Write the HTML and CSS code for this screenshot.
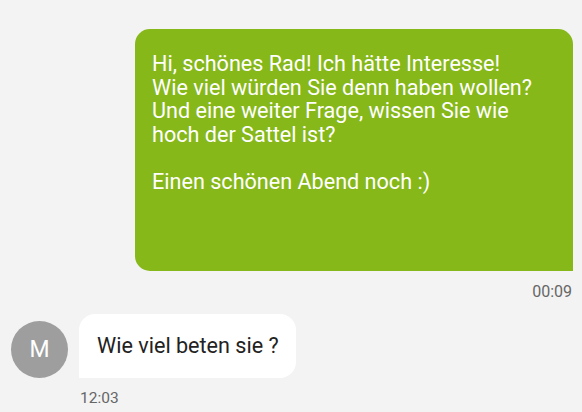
FILE: index.html
```html
<!DOCTYPE html>
<html lang="de">
<head>
    <meta charset="UTF-8">
    <meta name="viewport" content="width=device-width, initial-scale=1.0">
    <title>Nachrichten</title>
    <link rel="stylesheet" href="styles.css">
</head>
<body>
    <div class="chat">
        <div class="message sent">
            <div class="bubble bubble-sent">
                Hi, schönes Rad! Ich hätte Interesse!<br>
                Wie viel würden Sie denn haben wollen?<br>
                Und eine weiter Frage, wissen Sie wie<br>
                hoch der Sattel ist?<br>
                <br>
                Einen schönen Abend noch :)
            </div>
            <div class="time">00:09</div>
        </div>

        <div class="message received">
            <div class="row">
                <div class="avatar">M</div>
                <div class="bubble bubble-received">Wie viel beten sie ?</div>
            </div>
            <div class="time time-left">12:03</div>
        </div>
    </div>
</body>
</html>
```

FILE: styles.css
```css
body {
    margin: 0;
    background-color: #f3f3f3;
    font-family: Roboto, "Liberation Sans", Arial, sans-serif;
    height: 100vh;
    overflow: hidden;
}
.chat {
    display: flex;
    flex-direction: column;
    padding: 29px 9px 0 11px;
}
.message {
    display: flex;
    flex-direction: column;
}
.sent {
    align-items: flex-end;
}
.received {
    align-items: flex-start;
    margin-top: 12px;
}
.bubble {
    box-sizing: border-box;
    font-size: 21.6px;
    line-height: 23.6px;
}
.bubble-sent {
    width: 438px;
    height: 242px;
    padding: 23px 16px 0 17px;
    background-color: #86b81a;
    color: #fff;
    border-radius: 15px 15px 0 15px;
}
.row {
    display: flex;
    align-items: flex-end;
    gap: 11px;
}
.avatar {
    width: 57px;
    height: 57px;
    border-radius: 50%;
    background-color: #9e9e9e;
    color: #fff;
    font-size: 23px;
    display: flex;
    justify-content: center;
    align-items: center;
}
.bubble-received {
    height: 64px;
    padding: 0 17px 0 18px;
    display: flex;
    align-items: center;
    background-color: #fff;
    color: #222;
    border-radius: 16px 16px 16px 0;
}
.time {
    margin-top: 11px;
    font-size: 16px;
    line-height: 20px;
    color: #666;
    padding-right: 1px;
}
.time-left {
    margin-top: 10px;
    margin-left: 69px;
    font-size: 15.5px;
}
```
